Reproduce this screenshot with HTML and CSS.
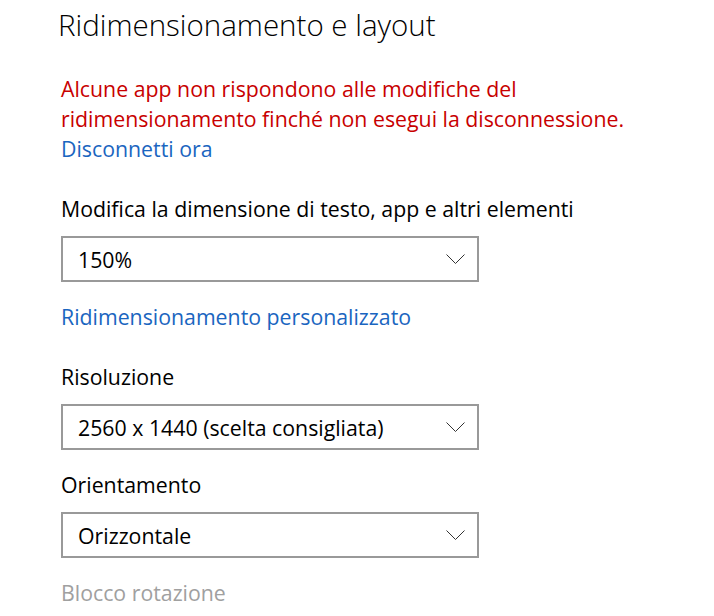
FILE: index.html
```html
<!DOCTYPE html>
<html lang="it">
<head>
    <title>Schermo</title>
    <link rel="stylesheet" href="styles.css">
</head>
<body>
    <div class="settings">
        <h1>Ridimensionamento e layout</h1>

        <p class="warning">Alcune app non rispondono alle modifiche del ridimensionamento finché non esegui la disconnessione.<br><a href="#" class="link">Disconnetti ora</a></p>

        <div class="field">
            <div class="label">Modifica la dimensione di testo, app e altri elementi</div>
            <div class="select">
                <span>150%</span>
                <svg class="chevron" width="19" height="10" viewBox="0 0 19 10"><path d="M0.5 0.5 L9.5 9.5 L18.5 0.5" fill="none" stroke="#333" stroke-width="1"/></svg>
            </div>
        </div>

        <a href="#" class="link custom">Ridimensionamento personalizzato</a>

        <div class="field">
            <div class="label">Risoluzione</div>
            <div class="select">
                <span>2560 x 1440 (scelta consigliata)</span>
                <svg class="chevron" width="19" height="10" viewBox="0 0 19 10"><path d="M0.5 0.5 L9.5 9.5 L18.5 0.5" fill="none" stroke="#333" stroke-width="1"/></svg>
            </div>
        </div>

        <div class="field">
            <div class="label">Orientamento</div>
            <div class="select">
                <span>Orizzontale</span>
                <svg class="chevron" width="19" height="10" viewBox="0 0 19 10"><path d="M0.5 0.5 L9.5 9.5 L18.5 0.5" fill="none" stroke="#333" stroke-width="1"/></svg>
            </div>
        </div>

        <div class="label disabled">Blocco rotazione</div>
    </div>
</body>
</html>
```

FILE: styles.css
```css
body {
    margin: 0;
    padding: 0;
    background-color: #fff;
    font-family: "Open Sans", "Noto Sans", sans-serif;
    font-size: 21.3px;
    color: #000;
}

.settings {
    padding: 5px 0 0 61px;
}

h1 {
    margin: 0 0 0 -3px;
    font-size: 29.5px;
    font-weight: 300;
    line-height: 40px;
}

.warning {
    margin: 29px 0 0 0;
    line-height: 30px;
    color: #c80000;
    width: 600px;
}

.link {
    color: #1a65c0;
    text-decoration: none;
}

.custom {
    display: block;
    margin-top: 20px;
    line-height: 30px;
}

.field {
    margin-top: 30px;
}

.field + .field {
    margin-top: 20px;
}

.label {
    line-height: 30px;
}

.select {
    margin-top: 12px;
    height: 42px;
    width: 387px;
    border: 2px solid #999;
    display: flex;
    align-items: center;
    justify-content: space-between;
    padding: 0 12px 0 15px;
}

.chevron {
    display: block;
}

.disabled {
    margin-top: 20px;
    color: #a0a0a0;
}
```
